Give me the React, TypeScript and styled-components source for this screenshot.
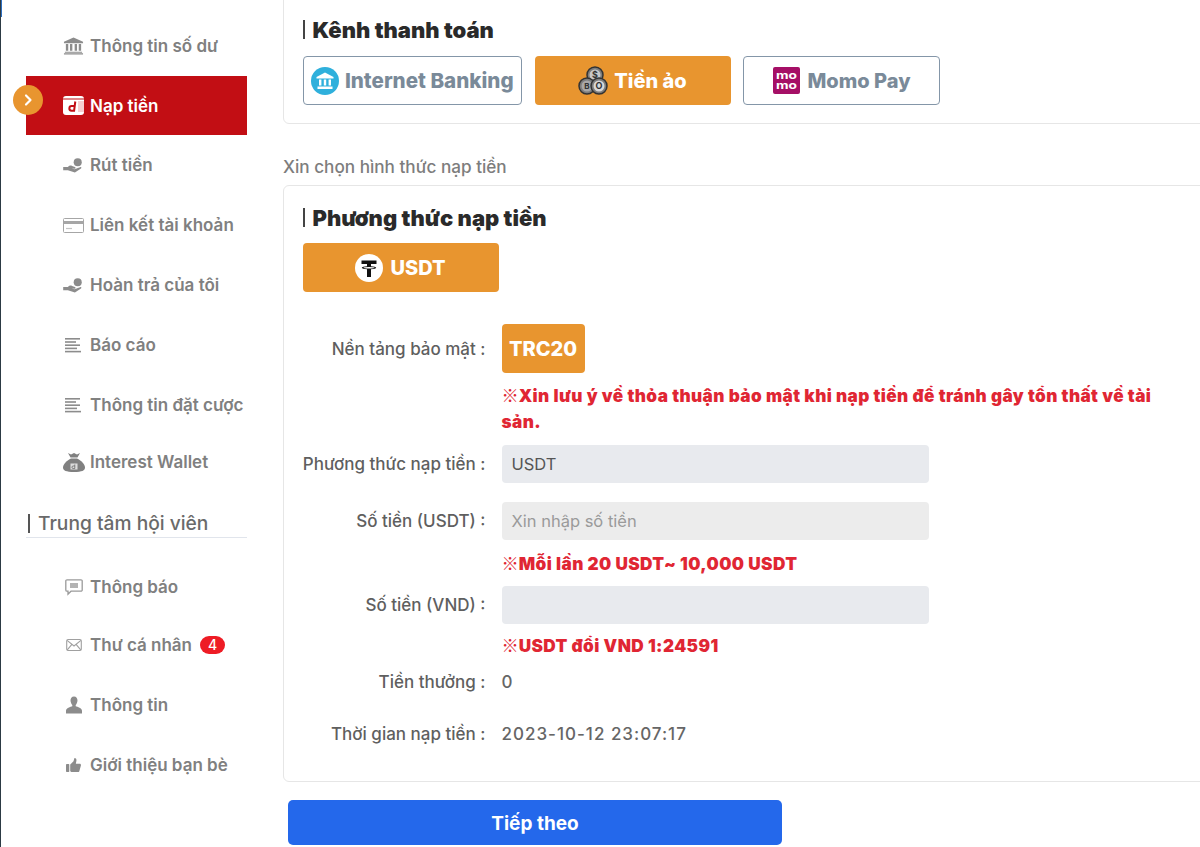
import React from 'react';
import styled, { createGlobalStyle } from 'styled-components';

const GlobalStyle = createGlobalStyle`
  html, body {
    margin: 0;
    padding: 0;
    background: #fff;
    font-family: 'Inter', 'Noto Sans CJK JP', sans-serif;
  }
  * { box-sizing: border-box; }
`;

const Page = styled.div`
  position: relative;
  display: flex;
  height: 847px;
  overflow: hidden;
  background: #fff;
  border-left: 1px solid #2c3a44;
  &::before {
    content: '';
    position: absolute;
    left: -1px;
    top: 0;
    width: 2px;
    height: 17px;
    background: #2d6fc0;
  }
`;

const Sidebar = styled.aside`
  flex: none;
  width: 221px;
  margin-left: 25px;
  padding-top: 16px;
`;

const MenuItem = styled.div<{ $active?: boolean; $height?: number }>`
  position: relative;
  display: flex;
  align-items: center;
  height: ${(p) => p.$height ?? 60}px;
  padding-left: 36px;
  background: ${(p) => (p.$active ? '#c20e14' : 'transparent')};
  color: ${(p) => (p.$active ? '#fff' : '#808080')};
  font-size: 17px;
  font-weight: 600;
  white-space: nowrap;
`;

const IconBox = styled.span`
  flex: none;
  width: 28px;
  height: 24px;
  padding-right: 5px;
  display: flex;
  align-items: center;
  justify-content: center;
  svg { display: block; flex: none; }
`;

const ActiveMarker = styled.span`
  position: absolute;
  left: -13px;
  top: 9px;
  width: 30px;
  height: 30px;
  border-radius: 50%;
  background: #e8952f;
  display: flex;
  align-items: center;
  justify-content: center;
`;

const CountBadge = styled.span`
  margin-left: 8px;
  width: 25px;
  height: 18px;
  border-radius: 9px;
  background: #ee1c25;
  color: #fff;
  font-size: 14px;
  font-weight: 500;
  line-height: 18px;
  text-align: center;
`;

const SideHeading = styled.div`
  margin-top: 22px;
  height: 27px;
  margin-bottom: 20px;
  border-bottom: 1px solid #e1e5ec;
  padding-left: 12px;
  position: relative;
  color: #6a6a6a;
  font-size: 19.2px;
  font-weight: 500;
  line-height: 25px;
  &::before {
    content: '';
    position: absolute;
    left: 2px;
    top: 3px;
    width: 2px;
    height: 19px;
    background: #555;
  }
`;

const Main = styled.main`
  flex: none;
  width: 1000px;
  margin-left: 36px;
  margin-top: -12px;
`;

const Card = styled.section<{ $pb: number; $pt: number }>`
  border: 1.5px solid #e6e6e6;
  border-radius: 6px;
  padding: ${(p) => p.$pt}px 0 ${(p) => p.$pb}px 18.5px;
`;

const CardTitle = styled.h2`
  position: relative;
  margin: 0;
  padding-left: 10px;
  color: #2a2a2a;
  font-size: 22px;
  font-weight: 900;
  line-height: 26px;
  &::before {
    content: '';
    position: absolute;
    left: 0;
    top: 3px;
    width: 2px;
    height: 19px;
    background: #444;
  }
`;

const ChannelRow = styled.div`
  display: flex;
  gap: 12.5px;
  margin-top: 13px;
`;

const ChannelButton = styled.div<{ $active?: boolean; $width: number; $size?: number }>`
  width: ${(p) => p.$width}px;
  height: 49px;
  display: flex;
  align-items: center;
  justify-content: center;
  gap: 6px;
  border-radius: 4px;
  border: ${(p) => (p.$active ? 'none' : '1.5px solid #8496a8')};
  background: ${(p) => (p.$active ? '#e8952f' : '#fff')};
  color: ${(p) => (p.$active ? '#fff' : '#7a8a99')};
  font-size: ${(p) => p.$size ?? 20}px;
  font-weight: 800;
  white-space: nowrap;
`;

const HintText = styled.div`
  margin: 33px 0 8px;
  height: 20px;
  color: #7d7d7d;
  font-size: 17.15px;
  font-weight: 500;
  line-height: 20px;
`;

const MethodButton = styled(ChannelButton)`
  margin-top: 12px;
  gap: 7px;
`;

const Row = styled.div<{ $mt: number }>`
  display: grid;
  grid-template-columns: 183px 1fr;
  column-gap: 16px;
  align-items: center;
  margin-top: ${(p) => p.$mt}px;
  min-height: 38px;
`;

const Label = styled.div`
  color: #5f5f5f;
  font-size: 17px;
  font-weight: 500;
  text-align: right;
  white-space: nowrap;
`;

const Value = styled.div`
  color: #666;
  font-size: 17px;
  font-weight: 500;
  letter-spacing: 1px;
`;

const Chip = styled.div`
  width: 83px;
  height: 49px;
  border-radius: 4px;
  background: #e8952f;
  color: #fff;
  font-size: 20px;
  font-weight: 800;
  line-height: 50px;
  text-align: center;
`;

const Field = styled.div<{ $muted?: boolean }>`
  width: 427px;
  height: 38px;
  border-radius: 4px;
  background: ${(p) => (p.$muted ? '#ececec' : '#e8eaee')};
  color: ${(p) => (p.$muted ? '#9a9a9a' : '#555')};
  font-size: 16.5px;
  font-weight: 400;
  line-height: 38px;
  padding-left: 10px;
`;

const Note = styled.div<{ $mt: number }>`
  margin-top: ${(p) => p.$mt}px;
  margin-left: 199px;
  width: 660px;
  color: #e02633;
  font-size: 17.2px;
  font-weight: 900;
  line-height: 26px;
  letter-spacing: 0.4px;
`;

const NoteMark = styled.span`
  font-family: 'Noto Sans CJK JP', sans-serif;
  font-weight: 900;
  letter-spacing: 0;
  line-height: 1;
`;

const NextButton = styled.div`
  width: 494px;
  height: 45px;
  margin: 17.5px 0 0 5px;
  border-radius: 5px;
  background: #2468eb;
  color: #fff;
  font-size: 19px;
  font-weight: 700;
  line-height: 47px;
  text-align: center;
`;

const BankIcon = () => (
  <svg width="21" height="18" viewBox="0 0 22 18" fill="#8c8c8c">
    <path d="M11 0 21 4.500V6H1V4.500Z" />
    <path d="M3 7h2.500v7H3zM7.300 7h2.500v7H7.300zM12.200 7h2.500v7h-2.500zM16.500 7H19v7h-2.500zM2 15h18v1H2zM1 16.500h20V18H1z" />
  </svg>
);

const DepositIcon = () => (
  <svg width="21" height="19" viewBox="0 0 21 19">
    <rect width="21" height="19" rx="3" fill="#fff" />
    <rect y="2.500" width="21" height="1" fill="#c20e14" />
    <rect x="15" y="5" width="6" height="11" fill="#f6cfd0" />
    <path d="M12.300 5.500 11 15.500M11.400 14.800H8.600a2.300 2.300 0 0 1 .3-4.800h3" fill="none" stroke="#c20e14" strokeWidth="2" />
  </svg>
);

const HandIcon = () => (
  <svg width="21" height="15" viewBox="0 0 22 16" fill="#8c8c8c">
    <circle cx="15.500" cy="4.500" r="4.300" />
    <path d="M0 9.500h5c1.500-1.500 3-1.700 4.500-1l3 1.200c1.200.5.800 2-.5 1.800l-3-.4 3 1 6-2.300c1.300-.4 2 .8 1 1.500L12.500 15.500 5 13H0z" />
  </svg>
);

const CardIcon = () => (
  <svg width="21" height="15" viewBox="0 0 21 15">
    <rect x="0.500" y="0.500" width="20" height="14" rx="1" fill="#fff" stroke="#a6a6a6" />
    <rect x="1" y="3" width="19" height="3" fill="#a6a6a6" />
    <path d="M3 10.500h6" stroke="#c4c4c4" strokeWidth="1.200" />
  </svg>
);

const ListIcon = () => (
  <svg width="17" height="15" viewBox="0 0 17 15" fill="#8c8c8c">
    <rect y="0" width="15" height="1.600" />
    <rect y="3.200" width="11" height="1.600" />
    <rect y="6.400" width="15" height="1.600" />
    <rect y="9.600" width="12" height="1.600" />
    <rect y="12.800" width="16" height="1.600" />
  </svg>
);

const MoneyBagIcon = () => (
  <svg width="22" height="19" viewBox="0 0 22 19">
    <path d="M5 0l3 1.500L11 0l3 1.500L17 0l-2.500 4.500h-7z" fill="#808080" />
    <path d="M8 5.500h6c4 2 8 5.500 8 9 0 3-3 4.500-11 4.500S0 17.500 0 14.500c0-3.500 4-7 8-9z" fill="#808080" />
    <rect x="7.500" y="10.500" width="7" height="6" fill="#ddd" />
    <path d="M11.800 11.500v4M11.800 15.500h-1.600a1.200 1.200 0 0 1 0-2.500h1.600" fill="none" stroke="#707070" strokeWidth="0.900" />
  </svg>
);

const ChatIcon = () => (
  <svg width="18" height="17" viewBox="0 0 18 17">
    <path d="M2 .8h14a1.200 1.200 0 0 1 1.200 1.200v9a1.200 1.200 0 0 1-1.200 1.200H6l-3 3v-3H2A1.200 1.200 0 0 1 .8 11V2A1.200 1.200 0 0 1 2 .8z" fill="#fff" stroke="#9a9a9a" strokeWidth="1.300" />
    <path d="M5 4h8v5H5z" fill="#b3b3b3" />
  </svg>
);

const MailIcon = () => (
  <svg width="16" height="12" viewBox="0 0 17 13" fill="none" stroke="#a0a0a0" strokeWidth="1.200">
    <rect x="0.600" y="0.600" width="15.800" height="11.800" rx="1.500" />
    <path d="M1 1.500 8.500 7.500 16 1.500M1 12l5-6M16 12l-5-6" />
  </svg>
);

const UserIcon = () => (
  <svg width="16" height="18" viewBox="0 0 17 18" fill="#8c8c8c">
    <path d="M8.500 0c2.500 0 3.700 1.800 3.700 4.200 0 2-1 3.800-1.900 4.800v1.300c2 .8 6.700 1.800 6.700 4.700V18H0v-3c0-2.900 4.700-3.900 6.700-4.700V9c-.9-1-1.900-2.800-1.900-4.800C4.800 1.800 6 0 8.500 0z" />
  </svg>
);

const ThumbIcon = () => (
  <svg width="15" height="15" viewBox="0 0 16 16" fill="#8c8c8c">
    <rect x="0" y="6.500" width="3.500" height="8.500" rx="0.800" />
    <path d="M4.500 7 8 3.500 9 0c1.800 0 2.500 1.500 2 3.500L10.500 6H14.500c1.200 0 1.700 1 1.400 2l-1.700 6c-.2.700-.8 1-1.500 1H6.500c-1 0-2-.5-2-1.500z" />
  </svg>
);

const ChevronIcon = () => (
  <svg width="12" height="14" viewBox="0 0 12 14" fill="none" stroke="#fff" strokeWidth="2.200" strokeLinecap="round" strokeLinejoin="round">
    <path d="M4 2.500 8.500 7 4 11.500" />
  </svg>
);

const BankBadge = () => (
  <svg width="28" height="28" viewBox="0 0 28 28">
    <circle cx="14" cy="14" r="14" fill="#2fb0dc" />
    <path d="M14 5.500 22.500 10v1.500h-17V10z" fill="#fff" />
    <path d="M8 12.500h2.400v6H8zM12.800 12.500h2.400v6h-2.400zM17.600 12.500H20v6h-2.400zM6.500 19.500h15V22h-15z" fill="#fff" />
  </svg>
);

const CoinsIcon = () => (
  <svg width="30" height="30" viewBox="0 0 30 30" fontFamily="Inter, sans-serif" fontWeight="700">
    <circle cx="17" cy="9" r="8" fill="#7d7d7d" stroke="#333" strokeWidth="1.500" />
    <circle cx="17" cy="9" r="5.500" fill="#c8c8c8" />
    <text x="17" y="12" fontSize="9" textAnchor="middle" fill="#333">$</text>
    <circle cx="9" cy="20" r="8" fill="#7d7d7d" stroke="#333" strokeWidth="1.500" />
    <circle cx="9" cy="20" r="5.500" fill="#a8a8a8" />
    <text x="9" y="23" fontSize="8" textAnchor="middle" fill="#333">B</text>
    <circle cx="21" cy="20" r="8" fill="#7d7d7d" stroke="#333" strokeWidth="1.500" />
    <circle cx="21" cy="20" r="5.500" fill="#d8d8d8" />
    <text x="21" y="23" fontSize="9" textAnchor="middle" fill="#333">O</text>
  </svg>
);

const MomoIcon = () => (
  <svg width="27" height="27" viewBox="0 0 27 27" fontFamily="Inter, sans-serif" fontWeight="700" fill="#fff" style={{ marginRight: 2 }}>
    <rect width="27" height="27" rx="2" fill="#a50f66" />
    <text x="3" y="11.500" fontSize="11" textLength="21" lengthAdjust="spacingAndGlyphs">mo</text>
    <text x="3" y="22" fontSize="11" textLength="21" lengthAdjust="spacingAndGlyphs">mo</text>
  </svg>
);

const TetherIcon = () => (
  <svg width="28" height="28" viewBox="0 0 28 28">
    <circle cx="14" cy="14" r="14" fill="#fff" />
    <path d="M6.500 6.500h15v3.500h-5.500v2.200c3 .2 5.200.8 5.200 1.500s-2.200 1.300-5.200 1.500V23h-4v-7.800c-3-.2-5.200-.8-5.200-1.500s2.200-1.300 5.200-1.500V10h-5.500z" fill="#111" />
    <ellipse cx="14" cy="13.700" rx="5.500" ry="0.700" fill="#fff" />
  </svg>
);

const topItems: [React.ReactNode, string, number?][] = [
  [<BankIcon />, 'Thông tin số dư'],
  [<DepositIcon />, 'Nạp tiền', 59],
  [<HandIcon />, 'Rút tiền'],
  [<CardIcon />, 'Liên kết tài khoản'],
  [<HandIcon />, 'Hoàn trả của tôi'],
  [<ListIcon />, 'Báo cáo'],
  [<ListIcon />, 'Thông tin đặt cược'],
  [<MoneyBagIcon />, 'Interest Wallet', 54],
];

const App: React.FC = () => {
  return (
    <>
      <GlobalStyle />
      <Page>
        <Sidebar>
          {topItems.map(([icon, name, height]) => (
            <MenuItem key={name} $active={name === 'Nạp tiền'} $height={height}>
              {name === 'Nạp tiền' && (
                <ActiveMarker>
                  <ChevronIcon />
                </ActiveMarker>
              )}
              <IconBox>{icon}</IconBox>
              {name}
            </MenuItem>
          ))}
          <SideHeading>Trung tâm hội viên</SideHeading>
          <MenuItem $height={58}>
            <IconBox><ChatIcon /></IconBox>
            Thông báo
          </MenuItem>
          <MenuItem $height={58}>
            <IconBox><MailIcon /></IconBox>
            Thư cá nhân
            <CountBadge>4</CountBadge>
          </MenuItem>
          <MenuItem $height={62}>
            <IconBox><UserIcon /></IconBox>
            Thông tin
          </MenuItem>
          <MenuItem $height={58}>
            <IconBox><ThumbIcon /></IconBox>
            Giới thiệu bạn bè
          </MenuItem>
        </Sidebar>
        <Main>
          <Card $pt={28} $pb={18}>
            <CardTitle>Kênh thanh toán</CardTitle>
            <ChannelRow>
              <ChannelButton $width={219.5} $size={20.6}>
                <BankBadge />
                Internet Banking
              </ChannelButton>
              <ChannelButton $active $width={196}>
                <CoinsIcon />
                Tiền ảo
              </ChannelButton>
              <ChannelButton $width={197}>
                <MomoIcon />
                Momo Pay
              </ChannelButton>
            </ChannelRow>
          </Card>
          <HintText>Xin chọn hình thức nạp tiền</HintText>
          <Card $pt={19} $pb={28}>
            <CardTitle>Phương thức nạp tiền</CardTitle>
            <MethodButton $active $width={196}>
              <TetherIcon />
              USDT
            </MethodButton>
            <Row $mt={32}>
              <Label>Nền tảng bảo mật :</Label>
              <Chip>TRC20</Chip>
            </Row>
            <Note $mt={10}><NoteMark>※</NoteMark>Xin lưu ý về thỏa thuận bảo mật khi nạp tiền để tránh gây tổn thất về tài sản.</Note>
            <Row $mt={10}>
              <Label>Phương thức nạp tiền :</Label>
              <Field>USDT</Field>
            </Row>
            <Row $mt={19}>
              <Label>Số tiền (USDT) :</Label>
              <Field $muted>Xin nhập số tiền</Field>
            </Row>
            <Note $mt={11}><NoteMark>※</NoteMark>Mỗi lần 20 USDT~ 10,000 USDT</Note>
            <Row $mt={9}>
              <Label>Số tiền (VND) :</Label>
              <Field />
            </Row>
            <Note $mt={9}><NoteMark>※</NoteMark>USDT đổi VND 1:24591</Note>
            <Row $mt={4}>
              <Label>Tiền thưởng :</Label>
              <Value>0</Value>
            </Row>
            <Row $mt={14}>
              <Label>Thời gian nạp tiền :</Label>
              <Value>2023-10-12 23:07:17</Value>
            </Row>
          </Card>
          <NextButton>Tiếp theo</NextButton>
        </Main>
      </Page>
    </>
  );
};

export default App;
